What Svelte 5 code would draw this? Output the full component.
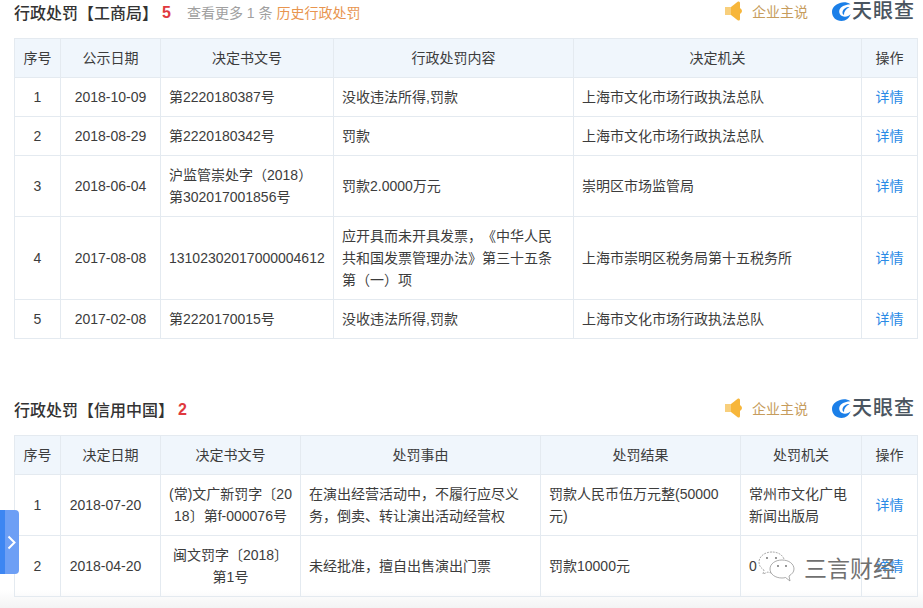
<script>
  const sectionA = {
    title: '行政处罚【工商局】',
    count: 5,
    cols: ['46px', '100px', '173px', '240px', '288px', '56px'],
    head: ['序号', '公示日期', '决定书文号', '行政处罚内容', '决定机关', '操作'],
    rows: [
      { h: 39, cells: ['1', '2018-10-09', '第2220180387号', '没收违法所得,罚款', '上海市文化市场行政执法总队'] },
      { h: 39, cells: ['2', '2018-08-29', '第2220180342号', '罚款', '上海市文化市场行政执法总队'] },
      { h: 61, cells: ['3', '2018-06-04', '沪监管崇处字（2018）第302017001856号', '罚款2.0000万元', '崇明区市场监管局'] },
      { h: 83, cells: ['4', '2017-08-08', '13102302017000004612', '应开具而未开具发票，《中华人民共和国发票管理办法》第三十五条第（一）项', '上海市崇明区税务局第十五税务所'] },
      { h: 39, cells: ['5', '2017-02-08', '第2220170015号', '没收违法所得,罚款', '上海市文化市场行政执法总队'] }
    ],
    center: [0, 1],
    offset: -1
  }

  const sectionB = {
    title: '行政处罚【信用中国】',
    count: 2,
    cols: ['46px', '100px', '140px', '240px', '200px', '121px', '56px'],
    head: ['序号', '决定日期', '决定书文号', '处罚事由', '处罚结果', '处罚机关', '操作'],
    rows: [
      { h: 61, cells: ['1', '2018-07-20', '(常)文广新罚字〔2018〕第f-000076号', '在演出经营活动中，不履行应尽义务，倒卖、转让演出活动经营权', '罚款人民币伍万元整(50000元)', '常州市文化广电新闻出版局'] },
      { h: 61, cells: ['2', '2018-04-20', '闽文罚字〔2018〕第1号', '未经批准，擅自出售演出门票', '罚款10000元', '0'] }
    ],
    center: [0, 1, 2],
    offset: 1
  }
</script>

{#snippet brand()}
  <div class="brand">
    <svg class="horn" width="19" height="20" viewBox="0 0 19 20">
      <rect x="0" y="6" width="6" height="8" fill="#f8cf7c" />
      <path d="M6 6 L13 0.5 Q15 0 15 2 L15 18 Q15 20 13 19.5 L6 14 Z" fill="#f7b63a" />
      <path d="M15 7 Q19 10 15 13 Z" fill="#f7b63a" />
    </svg>
    <span class="say">企业主说</span>
    <svg class="swirl" width="19" height="19" viewBox="0 0 19 19">
      <path d="M18.5 2.2 C15 0 11 0 8 1 C3 2.500 0 6 0 10 C0 15 4 19 9.500 19 C14 19 17.500 16 18.600 12 C16.500 14.500 13 15.500 10 14 C6.500 12 6.500 8 9 5.500 C11.500 3.200 15 2.500 18.500 2.200 Z" fill="#1b7fe8" />
      <path d="M17.500 5 C14 5 11 7 10.500 10 C10.300 11.500 11 12.500 12 13 C11.800 10 13.500 7 17.500 5 Z" fill="#1b7fe8" />
    </svg>
    <span class="eye">天眼查</span>
  </div>
{/snippet}

{#snippet table(s)}
  <table>
    <colgroup>
      {#each s.cols as w}<col style="width:{w}" />{/each}
    </colgroup>
    <thead>
      <tr>{#each s.head as h}<th>{h}</th>{/each}</tr>
    </thead>
    <tbody>
      {#each s.rows as row}
        <tr style="height:{row.h}px">
          {#each row.cells as c, i}
            <td class:mid={s.center.includes(i)} class:pad={i === 2} class:nudge={i === 1 && s.offset > 0}>{c}</td>
          {/each}
          <td class="mid"><span class="link">详情</span></td>
        </tr>
      {/each}
    </tbody>
  </table>
{/snippet}

<div class="page">
  <section class="first">
    <header>
      <h2>{sectionA.title}</h2>
      <b class="count">{sectionA.count}</b>
      <span class="more">查看更多 1 条 <em>历史行政处罚</em></span>
      {@render brand()}
    </header>
    {@render table(sectionA)}
  </section>

  <section class="second">
    <header>
      <h2>{sectionB.title}</h2>
      <b class="count">{sectionB.count}</b>
      {@render brand()}
    </header>
    {@render table(sectionB)}
  </section>

  <div class="tab">
    <svg width="9" height="15" viewBox="0 0 9 15"><path d="M1.5 1.5 L7.5 7.5 L1.5 13.5" fill="none" stroke="#fff" stroke-width="2" /></svg>
  </div>

  <div class="mark">
    <svg width="38" height="33" viewBox="0 0 38 33" fill="none" stroke="#888" stroke-width="0.7">
      <path d="M14 1 C6 1 1 6 1 11 C1 15 3 17 6 19 L5 23 L10 21 C11 21.500 12 21.700 13 21.800" stroke-dasharray="2 1" />
      <path d="M26 8 C24 3 19 1 14 1" stroke-dasharray="2 1" />
      <path d="M24 9 C17 9 12 13 12 18 C12 23 17 27 24 27 C25.500 27 26.500 26.800 27.500 26.500 L32 30 L31 25 C34 23 36 21 36 18 C36 13 31 9 24 9 Z" fill="#fff" />
      <circle cx="20" cy="15" r="0.9" fill="#666" stroke="none" />
      <circle cx="28" cy="15" r="0.9" fill="#666" stroke="none" />
      <circle cx="9" cy="7" r="0.9" fill="#666" stroke="none" />
      <circle cx="18" cy="7" r="0.9" fill="#666" stroke="none" />
    </svg>
    <span>三言财经</span>
  </div>
</div>

<style>
  :global(body) {
    margin: 0;
    background: #fff;
  }
  .page {
    position: relative;
    width: 923px;
    height: 608px;
    overflow: hidden;
    font-family: "Liberation Sans", "Noto Sans CJK SC", sans-serif;
    font-size: 14px;
    color: #3c3c3c;
    text-spacing-trim: space-all;
    background: linear-gradient(to bottom, #fff 590px, #f3f3f4 608px);
  }
  section {
    padding-left: 14px;
  }
  section.second {
    padding-top: 58px;
  }
  header {
    display: flex;
    align-items: center;
    height: 24px;
    margin-bottom: 14px;
  }
  h2 {
    margin: 0;
    font-size: 16px;
    font-weight: 500;
    color: #333;
  }
  .count {
    margin-left: 4px;
    margin-top: 2px;
    font-size: 16px;
    color: #e0393e;
  }
  .more {
    margin-left: 16px;
    color: #a0a0a0;
  }
  .more em {
    font-style: normal;
    color: #e8954f;
  }
  .brand {
    display: flex;
    align-items: center;
    margin-left: auto;
    margin-right: 8px;
    margin-bottom: 2px;
  }
  .say {
    margin-left: 8px;
    color: #c69c5c;
  }
  .swirl {
    margin-left: 24px;
  }
  .eye {
    margin-left: 1px;
    font-size: 20px;
    font-weight: 500;
    letter-spacing: 1px;
    line-height: 1;
    color: #4a5560;
  }
  table {
    table-layout: fixed;
    width: 903px;
    border-collapse: collapse;
    border: 1px solid #e4eaf0;
  }
  th,
  td {
    border: 1px solid #e4eaf0;
    line-height: 22px;
    padding: 0 8px;
    font-weight: 400;
    text-align: left;
    word-break: break-all;
  }
  th {
    height: 38px;
    padding: 0;
    text-align: center;
    background: #f0f6fc;
  }
  td.mid {
    padding: 0;
    text-align: center;
  }
  td.mid.pad {
    padding: 0 8px;
  }
  td.mid.nudge {
    padding-right: 10px;
  }
  .link {
    color: #2a8ae6;
  }
  .tab {
    position: absolute;
    left: 0;
    top: 510px;
    width: 19px;
    height: 64px;
    display: flex;
    align-items: center;
    justify-content: flex-end;
    box-sizing: border-box;
    border-radius: 0 4px 4px 0;
    background: linear-gradient(to right, #3d86f2 5px, #6d9ff5 5px);
  }
  .tab svg {
    margin-right: 3px;
  }
  .mark {
    position: absolute;
    left: 758px;
    top: 550px;
    display: flex;
    align-items: center;
    gap: 8px;
  }
  .mark span {
    font-size: 23px;
    color: #707070;
  }
</style>
